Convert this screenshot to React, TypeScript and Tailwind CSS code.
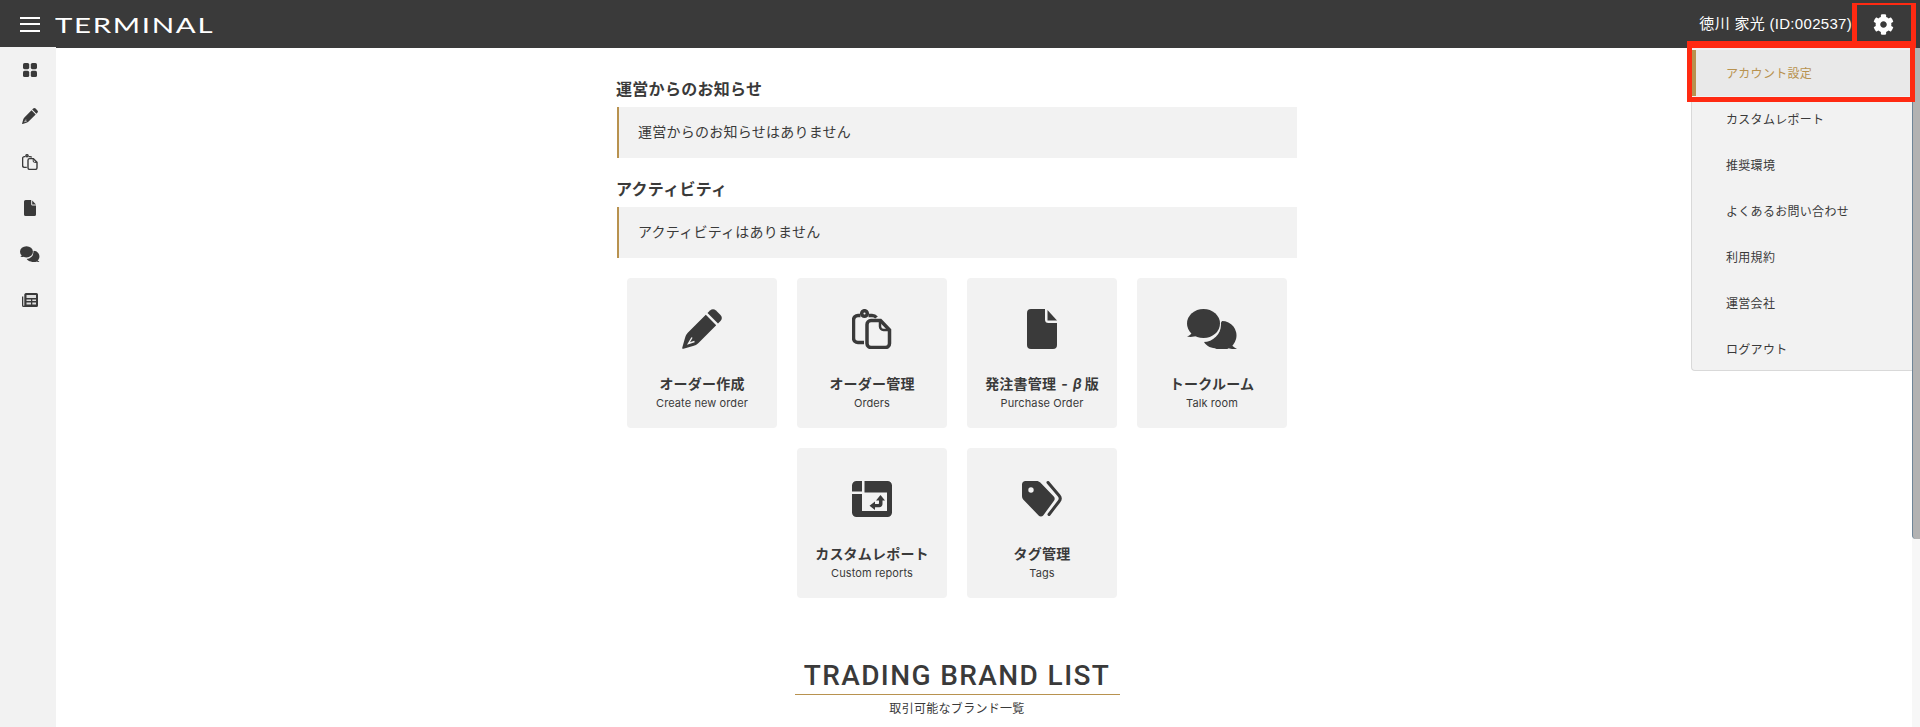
import { FaCog } from 'react-icons/fa';
import type { ReactNode } from 'react';

const iconColor = '#3a3a3a';

function DashIcon({ className }: { className?: string }) {
  return (
    <svg viewBox="0 0 14 14" className={className} fill={iconColor}>
      <rect x="0" y="0" width="6.2" height="6.2" rx="1.6" />
      <rect x="7.8" y="0" width="6.2" height="6.2" rx="1.6" />
      <rect x="0" y="7.8" width="6.2" height="6.2" rx="1.6" />
      <rect x="7.8" y="7.8" width="6.2" height="6.2" rx="1.6" />
    </svg>
  );
}

function PencilIcon({ className, bg = '#f2f2f2' }: { className?: string; bg?: string }) {
  return (
    <svg viewBox="0 0 40 40" className={className} fill={iconColor}>
      <path d="M28 1.5a4.5 4.5 0 0 1 6 0l4.5 4.5a4.5 4.5 0 0 1 0 6L36 14.5 25.5 4z" />
      <path d="M23.8 5.8 34.2 16.2 16.5 34c-1.5 1.5-3.5 2.5-5.5 3L1.5 39.7c-1 .3-1.5-.2-1.2-1.2L3 29c.5-2 1.5-4 3-5.5z" />
      <path d="M10 28.5 6.5 34.5 12.5 32.5" fill="none" stroke={bg} strokeWidth="1.4" />
    </svg>
  );
}

function ClipboardIcon({ className }: { className?: string }) {
  return (
    <svg viewBox="0 0 40 40" className={className} fill="none" stroke={iconColor} strokeWidth="3.5">
      <path d="M12 33.5H6a4.5 4.5 0 0 1-4.5-4.5V11A4.5 4.5 0 0 1 6 6.5h2.5" />
      <path d="M16.500 6.500H20c2 0 3.500.8 4.500 2" />
      <circle cx="12.500" cy="4.500" r="2.800" />
      <path d="M19 11.500h9.500l9 9.500v13.500a4 4 0 0 1-4 4H19a4 4 0 0 1-4-4v-19a4 4 0 0 1 4-4z" />
      <path d="M28 12v5.500a3.500 3.500 0 0 0 3.500 3.500H37" strokeWidth="2.500" />
    </svg>
  );
}

function FileIcon({ className }: { className?: string }) {
  return (
    <svg viewBox="0 0 30 40" className={className} fill={iconColor}>
      <path d="M4 0h14v10.500a3.500 3.500 0 0 0 3.500 3.500H30v22a4 4 0 0 1-4 4H4a4 4 0 0 1-4-4V4a4 4 0 0 1 4-4z" />
      <path d="M20.500 1 30 11.500h-9.500z" />
    </svg>
  );
}

function TalkIcon({ className, bg = '#f2f2f2' }: { className?: string; bg?: string }) {
  return (
    <svg viewBox="0 0 51 40" className={className} fill={iconColor}>
      <path d="M35 12a14.500 14.500 0 1 1-7 27.200C23 39.200 18 36 16 31l10-4z" />
      <path d="M43 34c1.500 2 4 4.500 7 6-3 .5-7 0-10-1.500z" />
      <circle cx="16.500" cy="15.500" r="17.500" fill={bg} />
      <ellipse cx="16.500" cy="14.500" rx="16.500" ry="14.500" />
      <path d="M5 23C4.500 25 2.500 26.500 0 27.500c3 .8 7 .5 10.500-1z" />
    </svg>
  );
}

function ReportIcon({ className, bg = '#f2f2f2' }: { className?: string; bg?: string }) {
  return (
    <svg viewBox="0 0 40 36" className={className} fill={iconColor}>
      <path d="M4.500 0h31A4.500 4.500 0 0 1 40 4.500v27a4.500 4.500 0 0 1-4.500 4.500h-31A4.500 4.500 0 0 1 0 31.500v-27A4.500 4.500 0 0 1 4.500 0z" />
      <path d="M0 10.500h10V0h2.500v11.500H35V30H10V13H0z" fill={bg} />
      <path d="M28.500 14 33 19.500h-2.500V23c0 2-1.200 3.200-3.200 3.200H23V29l-5.500-4.300L23 20.500V23h3c.7 0 1-.3 1-1v-2.500h-3z" />
    </svg>
  );
}

function TagIcon({ className, bg = '#f2f2f2' }: { className?: string; bg?: string }) {
  return (
    <svg viewBox="0 0 40 36" className={className} fill={iconColor}>
      <path d="M3.500 0h11c1.500 0 2.800.6 3.800 1.600l13.500 13.900c1.200 1.300 1.200 3.200 0 4.400L21.200 34.500c-1.300 1.300-3.300 1.300-4.600 0L1.200 18.400C.4 17.500 0 16.400 0 15.300V3.500C0 1.500 1.500 0 3.500 0z" />
      <circle cx="9" cy="9" r="2.700" fill={bg} />
      <path d="M26 1.500 37 14.500c1.600 1.900 1.600 4.100 0 6L27 33.500" fill="none" stroke={iconColor} strokeWidth="3" strokeLinecap="round" />
    </svg>
  );
}

function NewsIcon({ className }: { className?: string }) {
  return (
    <svg viewBox="0 0 16 14" className={className} fill={iconColor}>
      <path d="M3 .5A1.500 1.500 0 0 1 4.500 0h10A1.500 1.500 0 0 1 16 1.500v11a1.500 1.500 0 0 1-1.500 1.500H1.500A1.500 1.500 0 0 1 0 12.500V3.500h1.300v8.700a.5.500 0 0 0 1 0V1.500c0-.4.200-.7.700-1z" />
      <path d="M4.500 2h9.500v3H4.500zM4.500 6.500H9v1.600H4.500zM4.500 9.500H9v2H4.500zM10.300 6.500H14v1.600h-3.700zM10.300 9.500H14v2h-3.700z" fill="#f2f2f2" fillOpacity="0.9" />
    </svg>
  );
}

const navIcons = [
  <DashIcon className="w-3.5 h-3.5" />,
  <PencilIcon className="w-4 h-4" />,
  <ClipboardIcon className="w-4 h-4" />,
  <FileIcon className="w-3 h-4" />,
  <TalkIcon className="w-5 h-4" />,
  <NewsIcon className="w-4 h-3.5" />
];

const menuItems = ['アカウント設定', 'カスタムレポート', '推奨環境', 'よくあるお問い合わせ', '利用規約', '運営会社', 'ログアウト'];

type Card = { title: ReactNode; sub: string; icon: ReactNode };

const topCards: Card[] = [
  { title: 'オーダー作成', sub: 'Create new order', icon: <PencilIcon className="w-10 h-10" /> },
  { title: 'オーダー管理', sub: 'Orders', icon: <ClipboardIcon className="w-10 h-10" /> },
  {
    title: (
      <>
        発注書管理<span className="mx-[5px]">-</span>
        <i className="mr-[3px]">β</i>版
      </>
    ),
    sub: 'Purchase Order',
    icon: <FileIcon className="w-[30px] h-10" />
  },
  { title: 'トークルーム', sub: 'Talk room', icon: <TalkIcon className="w-[51px] h-10" /> }
];

const bottomCards: Card[] = [
  { title: 'カスタムレポート', sub: 'Custom reports', icon: <ReportIcon className="w-10 h-9" /> },
  { title: 'タグ管理', sub: 'Tags', icon: <TagIcon className="w-10 h-9" /> }
];

function MenuCard({ card }: { card: Card }) {
  return (
    <div className="w-[150px] h-[150px] bg-[#f2f2f2] rounded-sm flex flex-col items-center">
      <div className="h-10 mt-[31px] flex items-center justify-center">{card.icon}</div>
      <div className="mt-[27px] text-sm leading-4 font-bold text-[#3a3a3a] tracking-[0.2px]">{card.title}</div>
      <div className="mt-[3px] text-[11px] leading-4 text-[#3a3a3a] tracking-[0.1px]">{card.sub}</div>
    </div>
  );
}

function Notice({ title, body }: { title: string; body: string }) {
  return (
    <section className="w-[680px]">
      <h2 className="-ml-px text-base leading-[25px] font-bold tracking-[0.3px] text-[#3a3a3a]">{title}</h2>
      <div className="mt-[5px] h-[51px] pb-px bg-[#f2f2f2] border-l-2 border-[#b8924f] pl-[19px] flex items-center text-sm tracking-[0.25px] text-[#3a3a3a]">
        {body}
      </div>
    </section>
  );
}

export default function App() {
  return (
    <div
      className="relative h-[727px] overflow-hidden bg-white"
      style={{ fontFamily: 'Inter, "Liberation Sans", "Noto Sans CJK JP", sans-serif' }}
    >
      <header className="h-12 bg-[#3a3a3a] flex items-center text-white">
        <div className="ml-5 w-5 h-[15px] flex flex-col justify-between">
          <span className="h-0.5 bg-white" />
          <span className="h-0.5 bg-white" />
          <span className="h-0.5 bg-white" />
        </div>
        <span
          className="ml-[15px] w-[113px] origin-left scale-x-[1.4] text-[21px] leading-none font-normal tracking-[1.2px] text-white"
          style={{ fontFamily: 'Lato, sans-serif' }}
        >
          TERMINAL
        </span>
        <span
          className="ml-auto text-[15px] tracking-[0.3px] whitespace-pre"
          style={{ fontFamily: '"Liberation Sans", "Noto Sans CJK JP", sans-serif' }}
        >
          徳川 家光 (ID:002537)
        </span>
        <div className="w-[62px] mr-1.5 flex items-center justify-center">
          <FaCog className="w-[21px] h-[21px] text-white" />
        </div>
      </header>

      <div className="flex h-[679px]">
        <nav className="w-14 pl-[3px] bg-[#f2f2f2] flex flex-col items-center -mt-px">
          {navIcons.map((icon, i) => (
            <div key={i} className="h-[46px] flex items-center justify-center">
              {icon}
            </div>
          ))}
        </nav>

        <main className="flex-1 pr-[62px] flex flex-col items-center pt-[29px]">
          <Notice title="運営からのお知らせ" body="運営からのお知らせはありません" />
          <div className="mt-[19px]">
            <Notice title="アクティビティ" body="アクティビティはありません" />
          </div>
          <div className="mt-5 flex gap-5">
            {topCards.map((card) => (
              <MenuCard key={card.sub} card={card} />
            ))}
          </div>
          <div className="mt-5 flex gap-5">
            {bottomCards.map((card) => (
              <MenuCard key={card.sub} card={card} />
            ))}
          </div>
          <div className="mt-[62px] w-[325px] text-center border-b border-[#b8924f] pb-0.5 whitespace-nowrap">
            <span
              className="text-[28px] leading-8 font-medium tracking-[1.4px] text-[#3a3a3a]"
              style={{ fontFamily: 'Roboto, "Liberation Sans", sans-serif' }}
            >
              TRADING BRAND LIST
            </span>
          </div>
          <p className="mt-1.5 text-xs tracking-[0.3px] text-[#3a3a3a]">取引可能なブランド一覧</p>
        </main>
      </div>

      {/* account dropdown */}
      <div className="absolute left-[1691px] top-12 w-[221px] h-[323px] pt-0.5 bg-[#f2f2f2] border-l border-b border-[#d9d9d9] rounded-bl-sm">
        {menuItems.map((item, i) => (
          <div
            key={item}
            className={
              i === 0
                ? 'h-[46px] pl-[30px] pt-0.5 border-l-4 border-[#b8924f] bg-[#e9e9e9] text-[#b8924f] flex items-center text-xs tracking-[0.3px]'
                : 'h-[46px] pl-[34px] pt-0.5 text-[#3a3a3a] flex items-center text-xs tracking-[0.3px]'
            }
          >
            {item}
          </div>
        ))}
      </div>

      {/* scrollbar */}
      <div className="absolute right-0 top-12 bottom-0 w-2 bg-[#f7f7f7]">
        <div className="h-[491px] bg-[#b2b2b2] border-l border-[#6f8598] rounded-bl-sm" />
      </div>

      {/* red callouts */}
      <div className="absolute left-[1852px] top-[3px] w-16 h-[45px] border-x-[5px] border-t-2 border-b-[7px] border-[#ff2a12]" />
      <div className="absolute left-[1687px] top-[41px] w-[228px] h-[61px] border-x-[5px] border-t-[7px] border-b-[5px] border-[#ff2a12]" />
    </div>
  );
}
